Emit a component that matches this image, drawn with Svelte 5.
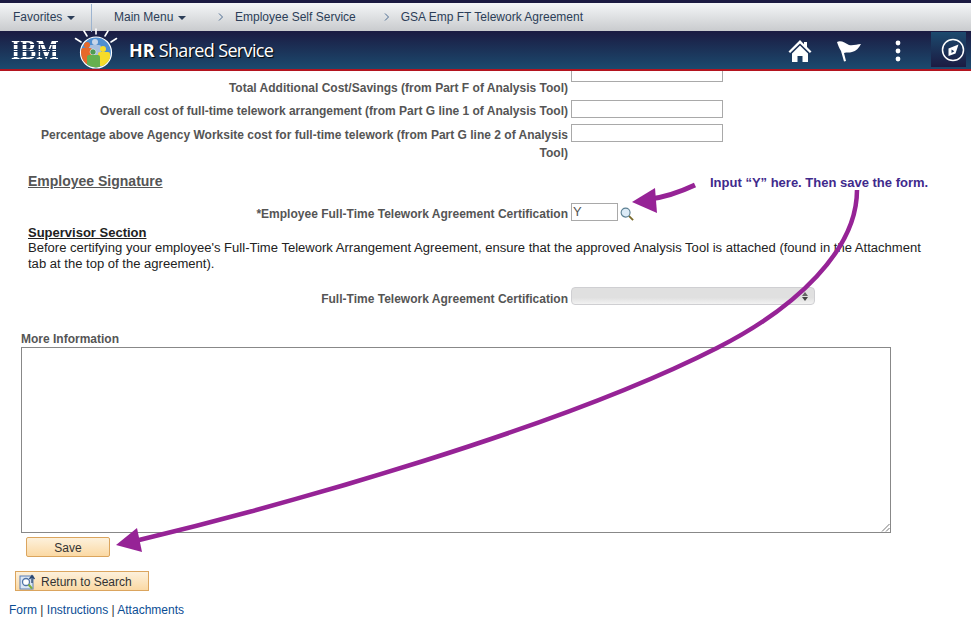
<script>
	const crumbs = ['Employee Self Service', 'GSA Emp FT Telework Agreement'];
</script>

<div class="page">
	<nav class="topnav">
		<span class="menu fav">Favorites <i class="caret"></i></span>
		<span class="sep"></span>
		<span class="menu main">Main Menu <i class="caret"></i></span>
		{#each crumbs as c}
			<span class="crumb">
				<svg class="chev" width="17" height="8" viewBox="0 0 17 8">
					<path d="M1 .5 4.500 4 1 7.500" fill="none" stroke="#4a6a90" />
				</svg>{c}
			</span>
		{/each}
	</nav>

	<header class="banner">
		<span class="ibm">IBM</span>
		<svg class="logo" width="46" height="42" viewBox="0 0 46 42">
			<defs>
				<clipPath id="disc"><circle cx="23" cy="24.500" r="15" /></clipPath>
			</defs>
			<g stroke="#fff" stroke-width="1.600" stroke-linecap="round">
				<line x1="23" y1="1" x2="23" y2="6" />
				<line x1="11" y1="3" x2="14" y2="8" />
				<line x1="35" y1="3" x2="32" y2="8" />
				<line x1="2.500" y1="10.500" x2="8" y2="14" />
				<line x1="43.500" y1="10.500" x2="38" y2="14" />
			</g>
			<circle cx="23" cy="24.500" r="15.500" fill="#4f8fd0" stroke="#fff" stroke-width="1.200" />
			<g clip-path="url(#disc)">
				<circle cx="22" cy="14" r="3" fill="#c9d6e8" />
				<path d="M16 27V19q0-2 2-2h8q2 0 2 2v8z" fill="#a9c0de" />
				<circle cx="14" cy="17" r="3" fill="#e8692a" />
				<path d="M8 36V22q0-2 2-2h7q2 0 2 2v14z" fill="#e8692a" />
				<circle cx="30" cy="21" r="3" fill="#f6dc2a" />
				<path d="M25 38V26q0-2 2-2h8q2 0 2 2v12z" fill="#f6dc2a" />
				<circle cx="20" cy="24" r="3" fill="#4f9a55" stroke="#fff" stroke-width=".5" />
				<path d="M14 41V29q0-2 2-2h9q2 0 2 2v12z" fill="#66b04f" />
			</g>
		</svg>
		<span class="title"><b>HR</b> Shared Service</span>
		<div class="actions">
			<svg class="home" width="24" height="24" viewBox="0 0 24 24" fill="#fff">
				<path d="M12 1 0.500 12.500l1.600 1.600L12 4.400l9.900 9.700 1.600-1.600L19 8V3h-3v2.200z" />
				<path d="M4 14.500 12 6.600l8 7.900V23h-5.500v-6h-5v6H4z" />
			</svg>
			<svg class="flag" width="25" height="24" viewBox="0 0 25 24" fill="#fff">
				<path d="M0 4C4 2 8 5 12 7c4 1 8-1 12-1-2 4-5 7-9 8-3 1-5 0-8 1l2 8-2 .5-3-10.500C2 10 1 7 0 4z" />
			</svg>
			<svg class="dots" width="8" height="24" viewBox="0 0 8 24" fill="#fff">
				<circle cx="4" cy="4" r="2.400" />
				<circle cx="4" cy="12" r="2.400" />
				<circle cx="4" cy="20" r="2.400" />
			</svg>
			<div class="navbar-btn">
				<svg width="24" height="24" viewBox="0 0 24 24">
					<circle cx="12" cy="12" r="10.500" fill="none" stroke="#fff" stroke-width="1.500" />
					<path d="M7.500 10.500 17.500 6.500 14.500 15.500 7.500 18z" fill="#fff" />
					<path d="M10.500 11.500v3.500l2.800-1.800z" fill="#17305a" />
				</svg>
			</div>
		</div>
	</header>

	<main class="content">
		<div class="row first">
			<label>Total Additional Cost/Savings (from Part F of Analysis Tool)</label>
			<span class="field clipped"></span>
		</div>
		<div class="row">
			<label>Overall cost of full-time telework arrangement (from Part G line 1 of Analysis Tool)</label>
			<span class="field"></span>
		</div>
		<div class="row r3">
			<label>Percentage above Agency Worksite cost for full-time telework (from Part G line 2 of Analysis Tool)</label>
			<span class="field"></span>
		</div>

		<h2 class="sig">Employee Signature</h2>

		<div class="row r4">
			<label>*Employee Full-Time Telework Agreement Certification</label>
			<span class="field short">Y</span>
			<svg class="lookup" width="14" height="14" viewBox="0 0 15 15">
				<line x1="9.500" y1="9.500" x2="14" y2="14" stroke="#7a6a2a" stroke-width="2" />
				<circle cx="6" cy="6" r="4.800" fill="#dcebf7" stroke="#5b7f92" stroke-width="1.200" />
			</svg>
		</div>

		<section class="sup">
			<h3>Supervisor Section</h3>
			<p>Before certifying your employee's Full-Time Telework Arrangement Agreement, ensure that the approved Analysis Tool is attached (found in the Attachment tab at the top of the agreement).</p>
		</section>

		<div class="row r5">
			<label>Full-Time Telework Agreement Certification</label>
			<span class="select"><span class="spin"><i></i><i></i></span></span>
		</div>

		<div class="more">
			<div class="more-label">More Information</div>
			<div class="textarea">
				<svg class="grip" width="9" height="9" viewBox="0 0 9 9" stroke="#777" stroke-width="1">
					<line x1="1" y1="8.500" x2="8.500" y2="1" />
					<line x1="5" y1="8.500" x2="8.500" y2="5" />
				</svg>
			</div>
		</div>

		<button class="btn save">Save</button>
		<button class="btn ret">
			<svg width="18" height="16" viewBox="0 0 18 16">
				<rect x="1" y="2" width="13" height="13" fill="#dbe6f4" stroke="#5a7fb5" />
				<circle cx="7" cy="8" r="3.500" fill="#fff" stroke="#4f74a8" stroke-width="1.300" />
				<line x1="9.500" y1="10.500" x2="13" y2="14.500" stroke="#7fae3c" stroke-width="2" />
				<path d="M13 9V3M10.500 5 13 1.500 15.500 5" fill="none" stroke="#27446f" stroke-width="1.300" />
			</svg>
			Return to Search
		</button>

		<div class="links">
			<a href="#form">Form</a> | <a href="#instructions">Instructions</a> | <a href="#attachments">Attachments</a>
		</div>
	</main>

	<!-- annotation layer drawn over the form -->
	<svg class="markup" width="971" height="620" viewBox="0 0 971 620">
		<g fill="none" stroke="#962396">
			<path d="M695 185C680 192 666 197 650 199" stroke-width="5" />
			<path d="M857 190C857 250 796 308 717 348C560 428 285 505 135 541" stroke-width="4.500" />
		</g>
		<path d="M632 202 655 188 657 213z" fill="#962396" />
		<path d="M116 545 137 528 142 552z" fill="#962396" />
	</svg>
	<div class="note">Input “Y” here. Then save the form.</div>
</div>

<style>
	:global(body) {
		margin: 0;
		background: #fff;
	}

	.page {
		position: relative;
		width: 971px;
		height: 620px;
		overflow: hidden;
		font-family: "Liberation Sans", Arial, sans-serif;
		color: #333;
	}

	.topnav {
		display: flex;
		align-items: center;
		height: 28px;
		border-top: 3px solid #1b1b42;
		background: linear-gradient(#f4f6f8, #c9cbce);
		font-size: 12px;
		color: #2c3e58;
	}

	.fav {
		margin-left: 13px;
		width: 78px;
	}

	.sep {
		width: 1px;
		height: 28px;
		margin-top: 2px;
		background: #9db4d0;
	}

	.main {
		margin-left: 22px;
		width: 104px;
	}

	.caret {
		display: inline-block;
		margin-left: 1px;
		vertical-align: middle;
		border-left: 4px solid transparent;
		border-right: 4px solid transparent;
		border-top: 4px solid #2c3e58;
	}

	.crumb {
		display: flex;
		align-items: center;
		margin-right: 28px;
	}

	.banner {
		display: flex;
		align-items: center;
		height: 38px;
		border-bottom: 2px solid #b3141f;
		background: linear-gradient(#1b1b42, #1c4a6e);
		color: #fff;
	}

	/* striped lettering, the way the logo is cut */
	.ibm {
		margin-left: 11px;
		margin-right: -10px;
		width: 58px;
		flex: none;
		font: bold 28px/20px "Liberation Serif", serif;
		transform: scaleX(0.85);
		transform-origin: left center;
		background: repeating-linear-gradient(#fff 0 1.700px, transparent 1.700px 2.400px);
		-webkit-background-clip: text;
		background-clip: text;
		color: transparent;
	}

	.logo {
		margin-left: 14px;
		margin-top: -2px;
		flex: none;
	}

	.title {
		margin-left: 10px;
		font: 18px "Open Sans", "Liberation Sans", sans-serif;
		letter-spacing: -0.65px;
		text-shadow: 1px 1px 1px #000;
	}

	.title b {
		font-weight: 700;
		letter-spacing: 0;
	}

	.actions {
		display: flex;
		align-items: center;
		margin-left: auto;
		height: 100%;
	}

	.home {
		margin-right: 25px;
		margin-top: 2px;
	}

	.flag {
		margin-right: 32px;
	}

	.dots {
		margin-right: 29px;
		margin-top: 2px;
	}

	.navbar-btn {
		display: flex;
		align-items: center;
		align-self: flex-start;
		box-sizing: border-box;
		width: 35px;
		height: 35px;
		margin-top: 1px;
		margin-right: 5px;
		padding-left: 10px;
		background: linear-gradient(#1c4a6e, #1b1b42);
	}

	.content {
		display: flex;
		flex-direction: column;
		align-items: flex-start;
	}

	.row {
		display: grid;
		grid-template-columns: 568px auto auto;
		column-gap: 3px;
		align-items: start;
		font-size: 12px;
	}

	.row label {
		padding-left: 30px;
		text-align: right;
		font-size: 12.030px;
		font-weight: bold;
		color: #555;
		line-height: 18px;
		margin-top: 2px;
	}

	.field {
		display: block;
		box-sizing: border-box;
		width: 152px;
		height: 18px;
		border: 1px solid #a9a9a9;
		background: #fff;
		font-size: 13px;
		line-height: 16px;
		padding-left: 1px;
		color: #555;
	}

	.field.clipped {
		height: 11px;
		border-top: none;
	}

	.first {
		height: 29px;
	}

	.first label {
		margin-top: 8px;
	}

	.r3 {
		margin-top: 4px;
	}

	.sig {
		margin: 11px 0 0 28px;
		font-size: 14px;
		line-height: 16px;
		font-weight: bold;
		color: #555;
		text-decoration: underline;
	}

	.r4 {
		margin-top: 14px;
	}

	.field.short {
		width: 47px;
	}

	.lookup {
		margin-top: 4px;
		margin-left: -1px;
	}

	.sup {
		margin: 2px 0 0 28px;
		width: 900px;
		color: #222;
	}

	.sup h3 {
		margin: 0;
		font-size: 13px;
		line-height: 15px;
		font-weight: bold;
		text-decoration: underline;
	}

	.sup p {
		margin: 0;
		font-size: 13.060px;
		line-height: 15.500px;
	}

	.r5 {
		margin-top: 16px;
	}

	.r5 label {
		margin-top: 3px;
	}

	.select {
		display: flex;
		justify-content: flex-end;
		align-items: center;
		box-sizing: border-box;
		width: 244px;
		height: 18px;
		border: 1px solid #cfcfd2;
		border-radius: 4px;
		background: linear-gradient(#e0e0e0 60%, #f2f2f2);
		padding-right: 6px;
	}

	.spin {
		display: flex;
		flex-direction: column;
		gap: 1px;
	}

	.spin i {
		display: block;
		border-left: 3px solid transparent;
		border-right: 3px solid transparent;
	}

	.spin i:first-child {
		border-bottom: 4px solid #666;
	}

	.spin i:last-child {
		border-top: 4px solid #444;
	}

	.more {
		margin: 24px 0 0 21px;
	}

	.more-label {
		font-size: 12px;
		font-weight: bold;
		line-height: 15px;
		color: #555;
	}

	.textarea {
		position: relative;
		box-sizing: border-box;
		width: 870px;
		height: 186px;
		border: 1px solid #888;
	}

	.grip {
		position: absolute;
		right: 0;
		bottom: 0;
	}

	.btn {
		display: flex;
		align-items: center;
		justify-content: center;
		box-sizing: border-box;
		padding: 1px 0 0;
		border: 1px solid #dba55e;
		border-radius: 2px;
		background: linear-gradient(#fdf1dc, #fbd9a4);
		font: 12px "Liberation Sans", Arial, sans-serif;
		color: #333;
	}

	.save {
		width: 84px;
		height: 20px;
		margin: 4px 0 0 26px;
	}

	.ret {
		justify-content: flex-start;
		gap: 4px;
		width: 134px;
		height: 20px;
		margin: 14px 0 0 15px;
		padding-left: 3px;
		border-radius: 0;
	}

	.links {
		margin: 11px 0 0 9px;
		font-size: 12px;
		line-height: 16px;
		color: #333;
	}

	.links a {
		color: #0b4d94;
		text-decoration: none;
	}

	.markup {
		position: absolute;
		inset: 0;
		pointer-events: none;
	}

	.note {
		position: absolute;
		left: 710px;
		top: 176px;
		font-size: 13px;
		font-weight: bold;
		line-height: 14px;
		color: #3f2a8c;
		white-space: nowrap;
	}
</style>
